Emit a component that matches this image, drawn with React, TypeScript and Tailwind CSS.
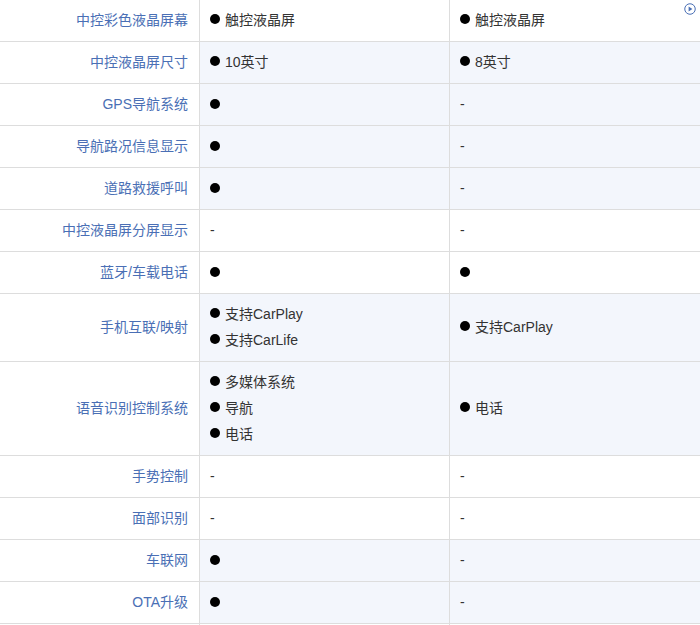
type Row = { label: string; a: string[]; b: string[]; diff?: boolean };

// "" = plain dot, "-" = not available
const rows: Row[] = [
  { label: "中控彩色液晶屏幕", a: ["触控液晶屏"], b: ["触控液晶屏"] },
  { label: "中控液晶屏尺寸", a: ["10英寸"], b: ["8英寸"], diff: true },
  { label: "GPS导航系统", a: [""], b: ["-"], diff: true },
  { label: "导航路况信息显示", a: [""], b: ["-"], diff: true },
  { label: "道路救援呼叫", a: [""], b: ["-"], diff: true },
  { label: "中控液晶屏分屏显示", a: ["-"], b: ["-"] },
  { label: "蓝牙/车载电话", a: [""], b: [""] },
  { label: "手机互联/映射", a: ["支持CarPlay", "支持CarLife"], b: ["支持CarPlay"], diff: true },
  { label: "语音识别控制系统", a: ["多媒体系统", "导航", "电话"], b: ["电话"], diff: true },
  { label: "手势控制", a: ["-"], b: ["-"] },
  { label: "面部识别", a: ["-"], b: ["-"] },
  { label: "车联网", a: [""], b: ["-"], diff: true },
  { label: "OTA升级", a: [""], b: ["-"], diff: true },
];

function Cell({ items, diff, className }: { items: string[]; diff?: boolean; className: string }) {
  return (
    <div className={`flex shrink-0 flex-col justify-center pb-2 pl-[10px] pt-[7px] ${diff ? "bg-[#f3f6fc]" : "bg-white"} ${className}`}>
      {items.map((item, i) =>
        item === "-" ? (
          <div key={i} className="h-[26px] leading-[26px]">-</div>
        ) : (
          <div key={i} className="flex h-[26px] items-center leading-[26px]">
            <span className={`mr-[5px] h-[10px] w-[10px] rounded-full bg-black ${item ? "mb-[2px]" : ""}`} />
            {item}
          </div>
        )
      )}
    </div>
  );
}

export default function App() {
  return (
    <div className="relative h-[625px] w-[700px] overflow-hidden bg-white text-[14px] text-[#333] font-['Liberation_Sans','Noto_Sans_CJK_SC',sans-serif]">
      {rows.map((row) => (
        <div key={row.label} className="flex border-b border-[#ddd]">
          <div className="flex w-[200px] shrink-0 items-center justify-end border-r border-[#ddd] pb-px pr-[11px] text-[#4a6fb5]">
            {row.label}
          </div>
          <Cell items={row.a} diff={row.diff} className="w-[250px] border-r border-[#ddd]" />
          <Cell items={row.b} diff={row.diff} className="w-[250px]" />
        </div>
      ))}
      {/* next row of the table, cut off by the window */}
      <div className="flex h-[10px]">
        <div className="w-[200px] shrink-0 border-r border-[#ddd]" />
        <div className="w-[250px] shrink-0 border-r border-[#ddd]" />
      </div>
      <svg className="absolute right-[4px] top-[3px]" width="12" height="12" viewBox="0 0 12 12">
        <circle cx="6" cy="6" r="5.25" fill="#fff" stroke="#4a6fb5" strokeWidth="1" />
        <path d="M4.6 3.4 L8.4 6 L4.6 8.6 Z" fill="#4a6fb5" />
      </svg>
    </div>
  );
}
